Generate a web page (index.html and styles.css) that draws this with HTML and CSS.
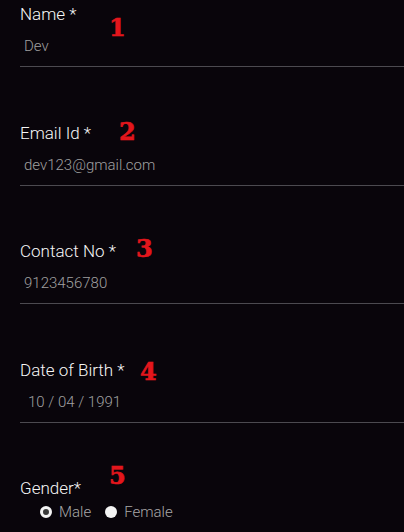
FILE: index.html
```html
<!DOCTYPE html>
<html>
<head>
<meta charset="utf-8">
<link rel="stylesheet" href="styles.css">
</head>
<body>
<form class="form">
  <div class="field">
    <label class="label">Name *</label>
    <input class="input" type="text" value="Dev">
    <span class="num n1">1</span>
  </div>
  <div class="field">
    <label class="label">Email Id *</label>
    <input class="input" type="text" value="dev123@gmail.com">
    <span class="num n2">2</span>
  </div>
  <div class="field">
    <label class="label">Contact No *</label>
    <input class="input" type="text" value="9123456780">
    <span class="num n3">3</span>
  </div>
  <div class="field">
    <label class="label">Date of Birth *</label>
    <input class="input date" type="text" value="10 / 04 / 1991">
    <span class="num n4">4</span>
  </div>
  <div class="field gender">
    <label class="label">Gender*</label>
    <div class="radios">
      <label class="opt"><input type="radio" name="g" class="radio" checked><span>Male</span></label>
      <label class="opt"><input type="radio" name="g" class="radio"><span>Female</span></label>
    </div>
    <span class="num n5">5</span>
  </div>
</form>
</body>
</html>
```
FILE: styles.css
```css
html, body {
  margin: 0;
  padding: 0;
  background: #09050b;
  height: 100%;
  overflow: hidden;
}
body {
  font-family: Roboto, "Liberation Sans", sans-serif;
}
.form {
  display: flex;
  flex-direction: column;
  gap: 55.5px;
  padding: 4px 0 0 20px;
}
.field {
  position: relative;
  display: flex;
  flex-direction: column;
  gap: 2px;
}
.label {
  font-size: 17px;
  line-height: 20px;
  font-weight: 300;
  color: #f6f6f6;
}
.input {
  box-sizing: border-box;
  height: 41px;
  margin: 0;
  padding: 0 0 0 4px;
  background: transparent;
  border: none;
  border-bottom: 1px solid #4c4a50;
  color: #a0a0a0;
  font-family: Roboto, "Liberation Sans", sans-serif;
  font-weight: 300;
  font-size: 15px;
  outline: none;
}
.input.date {
  padding-left: 8px;
}
.num {
  position: absolute;
  font-family: "DejaVu Serif", "Liberation Serif", serif;
  font-weight: bold;
  font-size: 24px;
  line-height: 26px;
  color: #e3161c;
  -webkit-text-stroke: 0.6px #e3161c;
}
.n1 { left: 89px; top: 11px; }
.n2 { left: 99px; top: -4px; }
.n3 { left: 116px; top: -5px; }
.n4 { left: 120px; top: -1px; }
.n5 { left: 89px; top: -15px; }
.gender {
  gap: 5px;
}
.radios {
  display: flex;
  gap: 14px;
  padding-left: 20px;
}
.opt {
  display: flex;
  align-items: center;
  gap: 7px;
  font-size: 15px;
  font-weight: 300;
  line-height: 18px;
  color: #a8a8a8;
}
.radio {
  appearance: none;
  -webkit-appearance: none;
  margin: 0;
  width: 12px;
  height: 12px;
  border-radius: 50%;
  background: #f4f4f4;
  box-sizing: border-box;
}
.radio:checked {
  border: 3px solid #f4f4f4;
  background: #3a3a3a;
}
```
